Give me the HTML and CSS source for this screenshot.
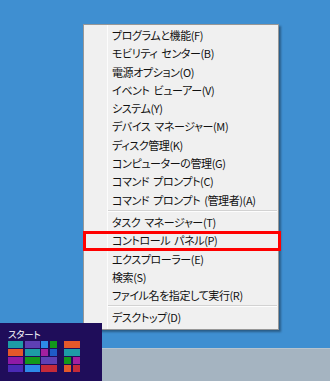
FILE: index.html
```html
<!DOCTYPE html>
<html lang="ja">
<head>
  <meta charset="UTF-8" />
  <title>コントロール パネル</title>
  <link rel="stylesheet" href="styles.css">
</head>
<body>

<div class="desktop">
  <ul class="menu">
    <li class="item">プログラムと機能(F)</li>
    <li class="item">モビリティ センター(B)</li>
    <li class="item">電源オプション(O)</li>
    <li class="item">イベント ビューアー(V)</li>
    <li class="item">システム(Y)</li>
    <li class="item">デバイス マネージャー(M)</li>
    <li class="item">ディスク管理(K)</li>
    <li class="item">コンピューターの管理(G)</li>
    <li class="item">コマンド プロンプト(C)</li>
    <li class="item">コマンド プロンプト (管理者)(A)</li>
    <li class="sep"></li>
    <li class="item">タスク マネージャー(T)</li>
    <li class="item marked">コントロール パネル(P)</li>
    <li class="item">エクスプローラー(E)</li>
    <li class="item">検索(S)</li>
    <li class="item">ファイル名を指定して実行(R)</li>
    <li class="sep"></li>
    <li class="item">デスクトップ(D)</li>
  </ul>
</div>

<div class="taskbar"></div>

<div class="start-thumb">
  <div class="start-title">スタート</div>
  <div class="tile-groups">
    <div class="tiles wide">
      <span class="t teal"></span>
      <span class="t purple"></span>
      <span class="t blue"></span>
      <span class="t green"></span>
      <span class="t orange"></span>
      <span class="t teal"></span>
      <span class="t magenta"></span>
      <span class="t navy"></span>
      <span class="t violet"></span>
      <span class="t green"></span>
      <span class="t purple span2"></span>
      <span class="t indigo"></span>
      <span class="t blue"></span>
      <span class="t red span2"></span>
    </div>
    <div class="tiles narrow">
      <span class="t orange span2"></span>
      <span class="t teal span2"></span>
      <span class="t green"></span>
      <span class="t magenta"></span>
      <span class="t orange"></span>
      <span class="t red"></span>
    </div>
  </div>
</div>

</body>
</html>
```

FILE: styles.css
```css
body {
  margin: 0;
  width: 330px;
  height: 381px;
  overflow: hidden;
  position: relative;
  background: #3f8fd1;
  font-family: "Noto Sans CJK JP", sans-serif;
}

.desktop {
  height: 348px;
  position: relative;
}

.taskbar {
  height: 33px;
  background: #a5b4c1;
  border-top: 1px solid #b7c4cf;
  box-sizing: border-box;
}

/* context menu */
.menu {
  position: absolute;
  left: 83px;
  top: 24px;
  width: 196px;
  margin: 0;
  padding: 1px 0 2px;
  list-style: none;
  box-sizing: border-box;
  background: #f0f0f0;
  border: 1px solid #979797;
  box-shadow: 2px 2px 2px rgba(0, 0, 0, 0.35);
}

.menu::before {
  content: "";
  position: absolute;
  top: 0;
  bottom: 0;
  left: 23px;
  width: 1px;
  background: #fcfcfc;
}

.item {
  position: relative;
  height: 18.3px;
  line-height: 18.3px;
  padding-left: 28px;
  font-size: 11px;
  color: #111111;
  white-space: nowrap;
  font-feature-settings: "palt";
  letter-spacing: -0.4px;
  word-spacing: 2px;
}

.sep {
  height: 4px;
  margin-left: 24px;
  margin-right: 1px;
  position: relative;
}

.sep::after {
  content: "";
  position: absolute;
  left: 0;
  right: 0;
  top: 1px;
  height: 1px;
  background: #d2d2d2;
  border-bottom: 1px solid #fdfdfd;
}

.marked::after {
  content: "";
  position: absolute;
  left: -1px;
  right: -3px;
  top: 0;
  bottom: -1px;
  border: 3px solid #ff0000;
}

/* start thumbnail */
.start-thumb {
  position: absolute;
  left: 0;
  top: 323px;
  width: 102px;
  height: 58px;
  box-sizing: border-box;
  padding: 5px 8px 0;
  background: #1f0d5a;
}

.start-title {
  color: #ffffff;
  font-size: 9.5px;
  line-height: 12px;
  font-feature-settings: "palt";
  letter-spacing: -0.3px;
}

.tile-groups {
  display: flex;
  gap: 7.5px;
  margin-top: 1px;
}

.tiles {
  display: grid;
  grid-auto-rows: 6.5px;
  gap: 1.5px;
}

.tiles.wide {
  grid-template-columns: 15px 15px 7px 7px;
}

.tiles.narrow {
  grid-template-columns: 7px 7px;
}

.span2 { grid-column: span 2; }

.teal { background: #1d9ca6; }
.purple { background: #5e40b4; }
.blue { background: #2d8ae8; }
.green { background: #13991b; }
.orange { background: #e4582a; }
.magenta { background: #a2209f; }
.navy { background: #1f5bc8; }
.violet { background: #8f1aa6; }
.indigo { background: #4a2ab5; }
.red { background: #c52a39; }
```
